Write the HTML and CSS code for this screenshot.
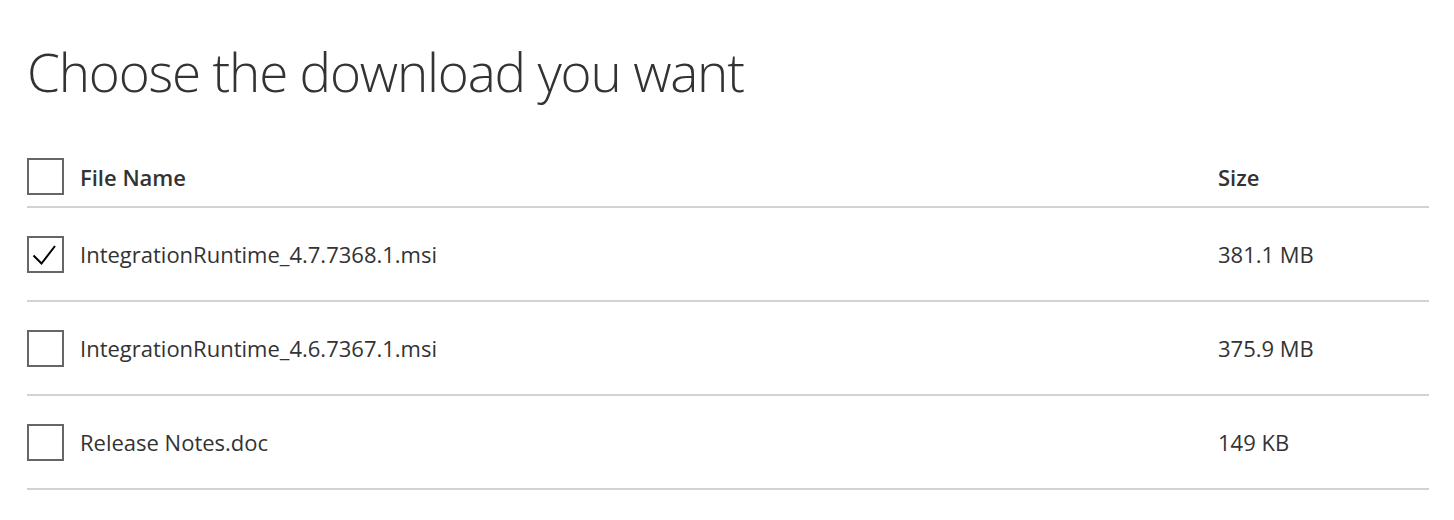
FILE: index.html
```html
<!DOCTYPE html>
<html lang="en">
<head>
<meta charset="utf-8">
<title>Choose the download you want</title>
<link rel="stylesheet" href="styles.css">
</head>
<body>
<main class="page">
  <h1 class="title">Choose the download you want</h1>
  <div class="table">
    <div class="row head">
      <span class="check"></span>
      <span class="name">File Name</span>
      <span class="size">Size</span>
    </div>
    <div class="row">
      <span class="check checked">
        <svg viewBox="0 0 33 33" width="33" height="33"><path d="M4.5 17.5 L12.5 25.5 L26 8" fill="none" stroke="#000" stroke-width="2"/></svg>
      </span>
      <span class="name">IntegrationRuntime_4.7.7368.1.msi</span>
      <span class="size">381.1 MB</span>
    </div>
    <div class="row">
      <span class="check"></span>
      <span class="name">IntegrationRuntime_4.6.7367.1.msi</span>
      <span class="size">375.9 MB</span>
    </div>
    <div class="row">
      <span class="check"></span>
      <span class="name">Release Notes.doc</span>
      <span class="size">149 KB</span>
    </div>
  </div>
</main>
</body>
</html>
```
FILE: styles.css
```css
* { box-sizing: border-box; }
html, body { margin: 0; padding: 0; background: #fff; }
body {
  font-family: "Open Sans", "Liberation Sans", sans-serif;
  color: #333;
}
.page {
  padding: 0 25px 0 27px;
}
.title {
  margin: 0;
  padding-top: 36px;
  font-weight: 300;
  font-size: 53px;
  letter-spacing: -1.2px;
  line-height: 72px;
  color: #333;
}
.table {
  margin-top: 50px;
  width: 1402px;
}
.row {
  display: flex;
  align-items: center;
  height: 94px;
  border-bottom: 2px solid #d2d2d2;
  font-size: 22px;
}
.row.head {
  height: auto;
  padding-bottom: 11px;
  font-weight: 600;
}
.check {
  flex: none;
  width: 37px;
  height: 37px;
  border: 2px solid #666;
  display: flex;
  align-items: center;
  justify-content: center;
}
.name {
  flex: 1;
  padding-left: 16px;
}
.size {
  width: 211px;
  flex: none;
}
```
